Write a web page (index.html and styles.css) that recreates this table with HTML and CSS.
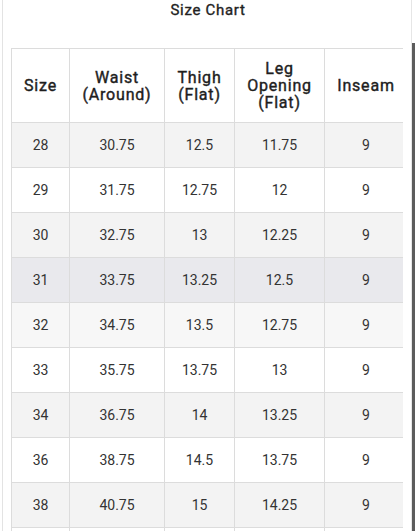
FILE: index.html
```html
<!DOCTYPE html>
<html>
<head>
<meta charset="utf-8">
<link rel="stylesheet" href="styles.css">
</head>
<body>
<div class="screen">
  <div class="panel">
    <div class="title">Size Chart</div>
    <div class="table-wrap">
      <table class="chart">
        <colgroup>
          <col class="c1"><col class="c2"><col class="c3"><col class="c4"><col class="c5">
        </colgroup>
        <thead>
          <tr>
            <th>Size</th>
            <th>Waist<br>(Around)</th>
            <th>Thigh<br>(Flat)</th>
            <th>Leg<br>Opening<br>(Flat)</th>
            <th>Inseam</th>
          </tr>
        </thead>
        <tbody>
          <tr class="gray"><td>28</td><td>30.75</td><td>12.5</td><td>11.75</td><td>9</td></tr>
          <tr class="white"><td>29</td><td>31.75</td><td>12.75</td><td>12</td><td>9</td></tr>
          <tr class="gray"><td>30</td><td>32.75</td><td>13</td><td>12.25</td><td>9</td></tr>
          <tr class="hover"><td>31</td><td>33.75</td><td>13.25</td><td>12.5</td><td>9</td></tr>
          <tr class="faint"><td>32</td><td>34.75</td><td>13.5</td><td>12.75</td><td>9</td></tr>
          <tr class="white"><td>33</td><td>35.75</td><td>13.75</td><td>13</td><td>9</td></tr>
          <tr class="gray"><td>34</td><td>36.75</td><td>14</td><td>13.25</td><td>9</td></tr>
          <tr class="white"><td>36</td><td>38.75</td><td>14.5</td><td>13.75</td><td>9</td></tr>
          <tr class="gray"><td>38</td><td>40.75</td><td>15</td><td>14.25</td><td>9</td></tr>
          <tr class="white"><td></td><td></td><td></td><td></td><td></td></tr>
        </tbody>
      </table>
    </div>
  </div>
  <div class="scrollbar"><div class="thumb"></div></div>
</div>
</body>
</html>
```
FILE: styles.css
```css
html, body {
  margin: 0;
  padding: 0;
  background: #ffffff;
  font-family: Roboto, "Liberation Sans", sans-serif;
}
body {
  height: 531px;
  overflow: hidden;
}
.screen {
  display: flex;
  height: 531px;
  overflow: hidden;
}
.panel {
  flex: 1;
  margin-left: 2px;
  border-left: 1px solid #e3e3e3;
  min-width: 0;
  overflow: hidden;
}
.title {
  height: 20px;
  line-height: 20px;
  text-align: center;
  font-size: 15px;
  font-weight: 400;
  -webkit-text-stroke: 0.35px #222222;
  letter-spacing: 0.7px;
  color: #222222;
  padding-left: 2px;
}
.table-wrap {
  margin-top: 28px;
  margin-left: 8px;
  width: 392px;
  overflow: hidden;
}
.chart {
  border-collapse: collapse;
  table-layout: fixed;
  width: 396px;
}
.c1 { width: 58px; }
.c2 { width: 95px; }
.c3 { width: 70px; }
.c4 { width: 90px; }
.c5 { width: 83px; }
.chart th, .chart td {
  border: 1px solid #dcdcdc;
  text-align: center;
  padding: 0;
}
.chart th {
  height: 73px;
  font-size: 16px;
  font-weight: 400;
  -webkit-text-stroke: 0.4px #1e1e1e;
  line-height: 17px;
  letter-spacing: 0.8px;
  color: #1e1e1e;
  background: #ffffff;
}
.chart td {
  height: 44px;
  font-size: 14px;
  color: #333333;
}
.gray td { background: #f3f3f3; }
.white td { background: #ffffff; }
.hover td { background: #e9e9ed; }
.faint td { background: #f7f7f7; }
.scrollbar {
  width: 4px;
  border-left: 1px solid #e6e6e6;
  display: flex;
  flex-direction: column;
}
.thumb {
  margin-top: 43px;
  flex: 1;
  width: 3px;
  background: #5c5c5c;
}
```
